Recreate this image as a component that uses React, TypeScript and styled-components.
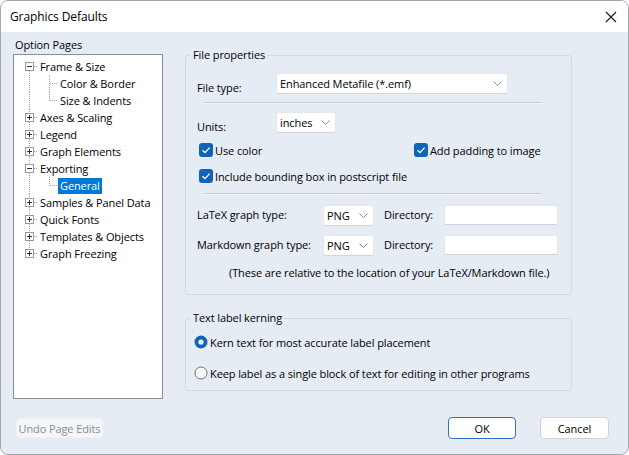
import React from "react";
import styled, { createGlobalStyle } from "styled-components";

const GlobalStyle = createGlobalStyle`
  html, body {
    margin: 0;
    padding: 0;
    background: #ffffff;
  }
  body {
    font-family: "Open Sans", "Noto Sans", sans-serif;
    font-size: 11px;
    letter-spacing: -0.1px;
    color: #000000;
  }
  * {
    box-sizing: border-box;
  }
`;

const Window = styled.div`
  width: 629px;
  height: 455px;
  display: flex;
  flex-direction: column;
  border: 1px solid #a3a8ae;
  border-radius: 8px;
  overflow: hidden;
  background: #e6ecf3;
`;

const TitleBar = styled.div`
  height: 31px;
  flex: none;
  display: flex;
  align-items: center;
  justify-content: space-between;
  padding: 0 11px 0 9px;
  background: #ffffff;
  font-size: 12px;
`;

const Body = styled.div`
  flex: 1;
  display: flex;
  flex-direction: column;
`;

const Main = styled.div`
  display: flex;
  padding: 5px 0 0 12px;
`;

const LeftPane = styled.div`
  width: 150px;
  display: flex;
  flex-direction: column;
`;

const PaneLabel = styled.div`
  height: 17px;
  line-height: 16px;
  padding-left: 2px;
`;

const TreeBox = styled.div`
  height: 345px;
  border: 1px solid #8b9096;
  background: #ffffff;
  padding-top: 3px;
`;

const TreeRow = styled.div`
  height: 17px;
  display: flex;
  align-items: center;
  white-space: nowrap;
`;

const TreeText = styled.span<{ $selected?: boolean }>`
  height: 16px;
  line-height: 16px;
  padding: 0 2px;
  background: ${(p) => (p.$selected ? "#0078d7" : "transparent")};
  color: ${(p) => (p.$selected ? "#ffffff" : "#000000")};
`;

const RightPane = styled.div`
  width: 387px;
  margin-left: 22px;
  display: flex;
  flex-direction: column;
`;

const Group = styled.fieldset<{ $top: number }>`
  margin: ${(p) => p.$top}px 0 0 0;
  padding: 0;
  border: 1px solid #d3d9e1;
  border-radius: 3px;
  min-width: 0;
`;

const Legend = styled.legend`
  padding: 0 2px;
  margin-left: 5px;
  line-height: 16px;
  font-size: 11px;
`;

const GroupBody = styled.div<{ $left: number; $bottom: number }>`
  display: flex;
  flex-direction: column;
  padding: 0 0 ${(p) => p.$bottom}px ${(p) => p.$left}px;
`;

const FieldRow = styled.div<{ $top: number }>`
  display: flex;
  align-items: flex-start;
  margin-top: ${(p) => p.$top}px;
`;

const FieldLabel = styled.div<{ $width: number; $pad?: number; $indent?: number }>`
  width: ${(p) => p.$width}px;
  flex: none;
  padding-top: ${(p) => p.$pad ?? 7}px;
  padding-left: ${(p) => p.$indent ?? 0}px;
  line-height: 16px;
  white-space: nowrap;
`;

const ComboBox = styled.div<{ $width: number }>`
  width: ${(p) => p.$width}px;
  height: 21px;
  flex: none;
  display: flex;
  align-items: center;
  justify-content: space-between;
  padding: 0 5px 0 3px;
  background: #ffffff;
  border: 1px solid #e4e7eb;
  border-bottom-color: #d2d6db;
  border-radius: 3px;
  white-space: nowrap;
`;

const TextInput = styled.div`
  width: 114px;
  height: 20px;
  flex: none;
  background: #ffffff;
  border: 1px solid #e4e7eb;
  border-bottom-color: #cfd3d8;
  border-radius: 2px;
`;

const Separator = styled.div<{ $top: number }>`
  margin: ${(p) => p.$top}px 0 0 6px;
  width: 339px;
  height: 2px;
  border-top: 1px solid #c6ccd4;
  border-bottom: 1px solid #f4f6f9;
`;

const CheckGrid = styled.div<{ $top: number }>`
  display: grid;
  grid-template-columns: 217px auto;
  margin-top: ${(p) => p.$top}px;
`;

const OptionLine = styled.label<{ $top?: number; $indent?: number }>`
  display: flex;
  align-items: center;
  gap: 2px;
  height: 16px;
  margin-top: ${(p) => p.$top ?? 0}px;
  margin-left: ${(p) => p.$indent ?? 0}px;
  white-space: nowrap;
`;

const Note = styled.div`
  margin-top: 9px;
  padding-left: 32px;
  line-height: 16px;
  white-space: nowrap;
`;

const Footer = styled.div`
  display: flex;
  align-items: flex-start;
  justify-content: space-between;
  padding: 18px 19px 0 15px;
`;

const ButtonGroup = styled.div`
  display: flex;
  gap: 24px;
`;

const Button = styled.button<{ $width: number; $primary?: boolean; $disabled?: boolean }>`
  width: ${(p) => p.$width}px;
  height: ${(p) => (p.$disabled ? 20 : 22)}px;
  margin-top: ${(p) => (p.$disabled ? 1 : 0)}px;
  padding: 0;
  font-family: inherit;
  font-size: 11px;
  letter-spacing: -0.1px;
  color: ${(p) => (p.$disabled ? "#8c8c8c" : "#000000")};
  background: ${(p) => (p.$disabled ? "#f4f6f9" : "#ffffff")};
  border: 1px solid ${(p) => (p.$disabled ? "#eef1f5" : p.$primary ? "#2b73c4" : "#d1d5da")};
  border-radius: 4px;
`;

const CloseIcon = () => (
  <svg width="12" height="12" viewBox="0 0 12 12">
    <path d="M1 1 L11 11 M11 1 L1 11" stroke="#1a1a1a" strokeWidth="1.1" fill="none" />
  </svg>
);

const Chevron = () => (
  <svg width="9" height="5" viewBox="0 0 9 5">
    <path d="M0.5 0.5 L4.5 4.5 L8.5 0.5" stroke="#8a8a8a" strokeWidth="1" fill="none" />
  </svg>
);

const CheckBox = () => (
  <svg width="14" height="14" viewBox="0 0 14 14">
    <rect x="0" y="0" width="14" height="14" rx="3" fill="#0f64b8" />
    <path d="M3.5 7.2 L6 9.6 L10.6 4.6" stroke="#ffffff" strokeWidth="1.3" fill="none" />
  </svg>
);

const Radio = ({ on }: { on?: boolean }) => (
  <svg width="14" height="14" viewBox="0 0 14 14">
    {on ? (
      <>
        <circle cx="7" cy="7" r="6.5" fill="#0f64b8" />
        <circle cx="7" cy="7" r="2.6" fill="#ffffff" />
      </>
    ) : (
      <circle cx="7" cy="7" r="6" fill="#f7f8fa" stroke="#6e6e6e" strokeWidth="1" />
    )}
  </svg>
);

type Node = { label: string; level: 0 | 1; expanded?: boolean; lastChild?: boolean; selected?: boolean };

const nodes: Node[] = [
  { label: "Frame & Size", level: 0, expanded: true },
  { label: "Color & Border", level: 1 },
  { label: "Size & Indents", level: 1, lastChild: true },
  { label: "Axes & Scaling", level: 0 },
  { label: "Legend", level: 0 },
  { label: "Graph Elements", level: 0 },
  { label: "Exporting", level: 0, expanded: true },
  { label: "General", level: 1, lastChild: true, selected: true },
  { label: "Samples & Panel Data", level: 0 },
  { label: "Quick Fonts", level: 0 },
  { label: "Templates & Objects", level: 0 },
  { label: "Graph Freezing", level: 0 },
];

const LINE = "#a3a3a3";

const TreeGutter = ({ node, first, last }: { node: Node; first: boolean; last: boolean }) => {
  if (node.level === 1) {
    return (
      <svg width="44" height="17" viewBox="0 0 44 17" shapeRendering="crispEdges">
        <line x1="15.5" y1="0" x2="15.5" y2="17" stroke={LINE} strokeDasharray="1 1" />
        <line x1="35.5" y1="0" x2="35.5" y2={node.lastChild ? 9 : 17} stroke={LINE} strokeDasharray="1 1" />
        <line x1="36" y1="8.5" x2="44" y2="8.5" stroke={LINE} strokeDasharray="1 1" />
      </svg>
    );
  }
  return (
    <svg width="24" height="17" viewBox="0 0 24 17" shapeRendering="crispEdges">
      {!first && <line x1="15.5" y1="0" x2="15.5" y2="4" stroke={LINE} strokeDasharray="1 1" />}
      {!last && <line x1="15.5" y1="13" x2="15.5" y2="17" stroke={LINE} strokeDasharray="1 1" />}
      <line x1="20" y1="8.5" x2="24" y2="8.5" stroke={LINE} strokeDasharray="1 1" />
      <rect x="11.5" y="4.5" width="8" height="8" fill="#ffffff" stroke="#9a9a9a" />
      <line x1="13" y1="8.5" x2="18" y2="8.5" stroke="#333333" />
      {!node.expanded && <line x1="15.5" y1="6" x2="15.5" y2="11" stroke="#333333" />}
    </svg>
  );
};

const App: React.FC = () => {
  return (
    <>
      <GlobalStyle />
      <Window>
        <TitleBar>
          <span>Graphics Defaults</span>
          <CloseIcon />
        </TitleBar>
        <Body>
          <Main>
            <LeftPane>
              <PaneLabel>Option Pages</PaneLabel>
              <TreeBox>
                {nodes.map((n, i) => (
                  <TreeRow key={n.label}>
                    <TreeGutter node={n} first={i === 0} last={i === nodes.length - 1} />
                    <TreeText $selected={n.selected}>{n.label}</TreeText>
                  </TreeRow>
                ))}
              </TreeBox>
            </LeftPane>
            <RightPane>
              <Group $top={10}>
                <Legend>File properties</Legend>
                <GroupBody $left={11} $bottom={13}>
                  <FieldRow $top={10}>
                    <FieldLabel $width={79}>File type:</FieldLabel>
                    <ComboBox $width={232}>
                      <span>Enhanced Metafile (*.emf)</span>
                      <Chevron />
                    </ComboBox>
                  </FieldRow>
                  <Separator $top={6} />
                  <FieldRow $top={8}>
                    <FieldLabel $width={79}>Units:</FieldLabel>
                    <ComboBox $width={60}>
                      <span>inches</span>
                      <Chevron />
                    </ComboBox>
                  </FieldRow>
                  <CheckGrid $top={7}>
                    <OptionLine $indent={2}>
                      <CheckBox />
                      <span>Use color</span>
                    </OptionLine>
                    <OptionLine>
                      <CheckBox />
                      <span>Add padding to image</span>
                    </OptionLine>
                  </CheckGrid>
                  <OptionLine $top={10} $indent={2}>
                    <CheckBox />
                    <span>Include bounding box in postscript file</span>
                  </OptionLine>
                  <Separator $top={9} />
                  <FieldRow $top={10}>
                    <FieldLabel $width={126} $pad={2}>LaTeX graph type:</FieldLabel>
                    <ComboBox $width={51}>
                      <span>PNG</span>
                      <Chevron />
                    </ComboBox>
                    <FieldLabel $width={70} $pad={2} $indent={10}>Directory:</FieldLabel>
                    <TextInput />
                  </FieldRow>
                  <FieldRow $top={9}>
                    <FieldLabel $width={126} $pad={2}>Markdown graph type:</FieldLabel>
                    <ComboBox $width={51}>
                      <span>PNG</span>
                      <Chevron />
                    </ComboBox>
                    <FieldLabel $width={70} $pad={2} $indent={10}>Directory:</FieldLabel>
                    <TextInput />
                  </FieldRow>
                  <Note>(These are relative to the location of your LaTeX/Markdown file.)</Note>
                </GroupBody>
              </Group>
              <Group $top={15}>
                <Legend>Text label kerning</Legend>
                <GroupBody $left={8} $bottom={9}>
                  <OptionLine $top={8}>
                    <Radio on />
                    <span>Kern text for most accurate label placement</span>
                  </OptionLine>
                  <OptionLine $top={15}>
                    <Radio />
                    <span>Keep label as a single block of text for editing in other programs</span>
                  </OptionLine>
                </GroupBody>
              </Group>
            </RightPane>
          </Main>
          <Footer>
            <Button $width={87} $disabled>Undo Page Edits</Button>
            <ButtonGroup>
              <Button $width={68} $primary>OK</Button>
              <Button $width={69}>Cancel</Button>
            </ButtonGroup>
          </Footer>
        </Body>
      </Window>
    </>
  );
};

export default App;
